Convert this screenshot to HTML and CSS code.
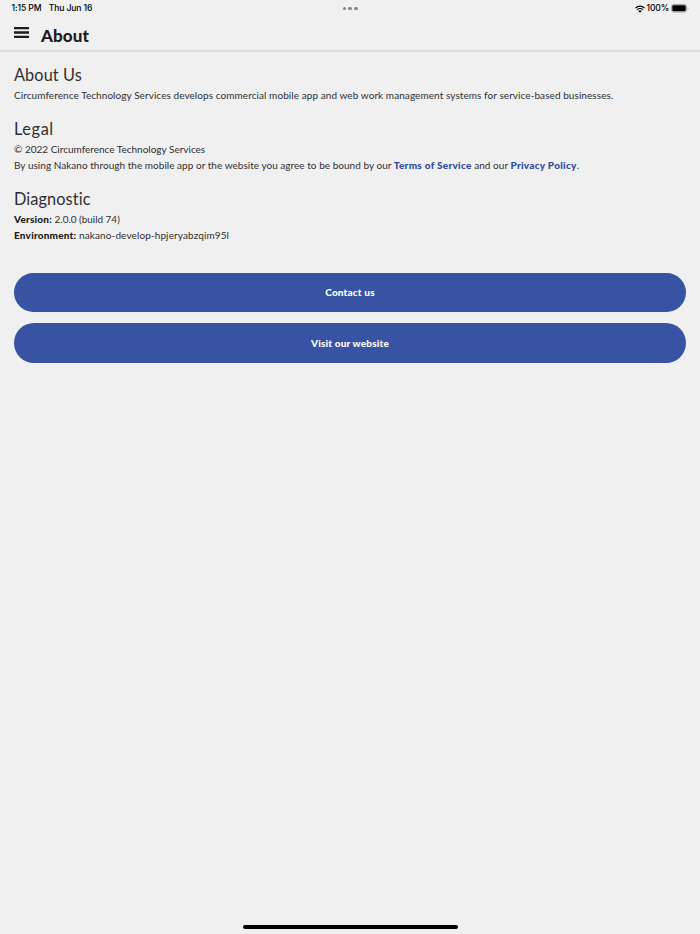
FILE: index.html
```html
<!DOCTYPE html>
<html lang="en">
<head>
<meta charset="utf-8">
<title>About</title>
<link rel="stylesheet" href="styles.css">
</head>
<body>
<div class="status">
  <div class="status-left"><span class="time">1:15 PM</span><span class="date">Thu Jun 16</span></div>
  <div class="dots"><i></i><i></i><i></i></div>
  <div class="status-right">
    <svg class="wifi" width="10" height="8" viewBox="0 0 20 16"><path d="M1.2 6a12.5 12.5 0 0 1 17.6 0M4.4 9.3a8 8 0 0 1 11.2 0" fill="none" stroke="#000" stroke-width="2.3"/><path d="M6.7 12.1a4.7 4.7 0 0 1 6.6 0L10 15.4z"/></svg>
    <span class="percent">100%</span>
    <svg class="battery" width="18" height="9" viewBox="0 0 18 9"><rect x=".5" y=".5" width="15" height="7.6" rx="2.2" fill="#efefef" stroke="#a6a6a6"/><rect x="1.3" y="1.3" width="13.4" height="6" rx="1.2"/><path d="M16.6 3v2.7q1-.4 1-1.35T16.6 3z" fill="#a6a6a6"/></svg>
  </div>
</div>
<header class="bar">
  <svg class="menu" width="15" height="11" viewBox="0 0 15 11"><path d="M0 1.2h15M0 5.5h15M0 9.8h15" stroke="#1c1c1e" stroke-width="2.3"/></svg>
  <h1>About</h1>
</header>
<main>
  <section>
    <h2>About Us</h2>
    <p class="summary">Circumference Technology Services develops commercial mobile app and web work management systems for service-based businesses.</p>
  </section>
  <section>
    <h2 class="legal">Legal</h2>
    <p class="copyright">© 2022 Circumference Technology Services</p>
    <p class="terms">By using Nakano through the mobile app or the website you agree to be bound by our <a>Terms of Service</a> and our <a>Privacy Policy</a>.</p>
  </section>
  <section>
    <h2>Diagnostic</h2>
    <p><b>Version:</b><span class="version"> 2.0.0 (build 74)</span></p>
    <p><b>Environment:</b><span class="environment"> nakano-develop-hpjeryabzqim95l</span></p>
  </section>
  <div class="actions">
    <button>Contact us</button>
    <button>Visit our website</button>
  </div>
</main>
<div class="home"></div>
</body>
</html>
```
FILE: styles.css
```css
* { box-sizing: border-box; }
body {
  margin: 0;
  height: 934px;
  display: flex;
  flex-direction: column;
  background: #f0f0f0;
  color: #2f2f31;
  font: 10px/16.5px Lato, "Open Sans", sans-serif;
  font-variant-ligatures: none;
}
.status {
  height: 17px;
  padding: 0 11px 0 11.5px;
  display: grid;
  grid-template-columns: 1fr auto 1fr;
  align-items: center;
  font: 500 8.6px/17px Inter, sans-serif;
  color: #000;
}
.status-left { letter-spacing: -.12px; }
.date { margin-left: 7.3px; }
.dots { display: flex; gap: 2px; }
.dots i { width: 3.6px; height: 3.6px; border-radius: 50%; background: #858585; }
.status-right { display: flex; align-items: center; justify-content: flex-end; }
.percent { margin: 0 2px 0 2px; letter-spacing: -.2px; }
.bar {
  height: 35px;
  padding: 10px 14px 0;
  display: flex;
  align-items: flex-start;
  border-bottom: 2px solid #dedede;
}
h1 { margin: 0 0 0 12px; font-size: 17px; line-height: 18px; font-weight: 900; letter-spacing: .1px; color: #1c1c1e; }
main { flex: 1; padding: 12px 14px 0; }
section { margin-bottom: 14px; }
h2 { margin: 0 0 2px; font-size: 16.3px; line-height: 21px; font-weight: 400; letter-spacing: .1px; }
.legal { letter-spacing: .6px; }
p { margin: 0; height: 16.5px; white-space: pre; letter-spacing: .2px; }
.summary { letter-spacing: .07px; }
.copyright { letter-spacing: 0; }
.terms { letter-spacing: .03px; }
.version { letter-spacing: -.03px; }
.environment { letter-spacing: .11px; }
b { font-weight: 900; color: #1c1c1e; }
a { font-weight: 900; letter-spacing: .28px; color: #3149a0; }
.actions { display: flex; flex-direction: column; gap: 11px; padding-top: 15px; }
button {
  height: 39.5px;
  border: 0;
  border-radius: 20px;
  background: #3853a4;
  color: #fff;
  font: 900 10px/16px Lato, sans-serif;
  letter-spacing: .16px;
}
.home { width: 215px; height: 4px; margin: 0 auto 5px; border-radius: 2px; background: #000; }
```
